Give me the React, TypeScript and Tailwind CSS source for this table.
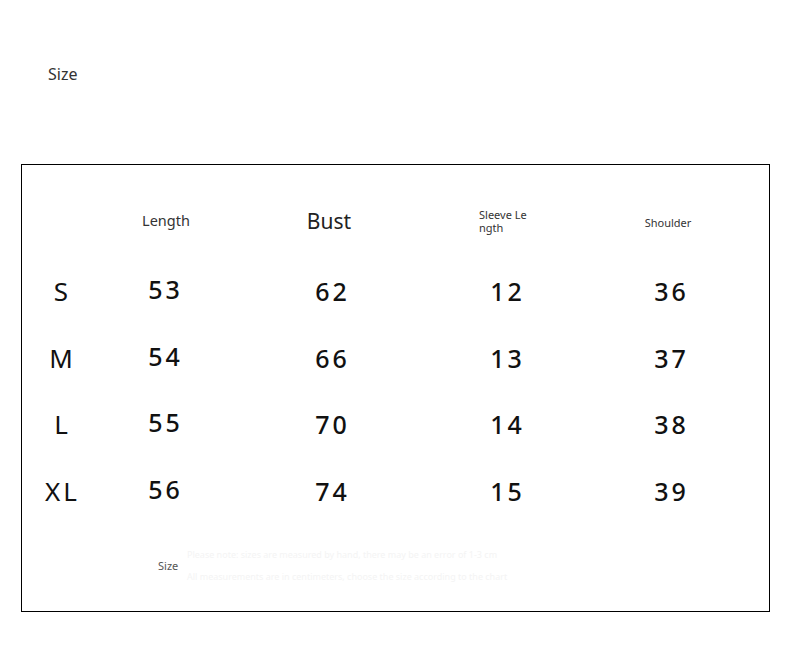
import React from "react";

const rows = [
  ["S", "53", "62", "12", "36"],
  ["M", "54", "66", "13", "37"],
  ["L", "55", "70", "14", "38"],
  ["XL", "56", "74", "15", "39"],
];

const font = { fontFamily: '"Noto Sans", "Open Sans", sans-serif' };

export default function App() {
  return (
    <div className="w-[790px] h-[663px] bg-white text-black" style={font}>
      <div className="pt-[63px] pl-[48px] h-[164px]">
        <div className="text-[16px] leading-[22px] text-[#333]">Size</div>
      </div>
      <div className="ml-[21px] w-[749px] h-[448px] border border-black">
        <div className="flex h-[76px] mt-[18px] items-center">
          <div className="w-[78px]" />
          <div className="w-[128px] flex justify-center text-[14.5px] leading-[20px] text-[#333] pl-[4px] -mt-[2px]">Length</div>
          <div className="w-[206px] flex justify-center text-[21px] leading-[28px] text-[#222] pr-[4px]">Bust</div>
          <div className="w-[144px] flex justify-center">
            <div className="w-[54px] text-[11px] leading-[13px] text-[#333] break-all">Sleeve Le ngth</div>
          </div>
          <div className="w-[184px] flex justify-center text-[11px] leading-[16px] text-[#333] pt-[3px] pr-[4px]">Shoulder</div>
        </div>
        {rows.map((r) => (
          <div key={r[0]} className="flex h-[66.5px] items-center text-[#111] font-medium">
            <div className="w-[78px] flex justify-center text-[26px] leading-[32px] tracking-[3px] pl-[3px] -mt-[2px] font-normal">{r[0]}</div>
            <div className="w-[128px] flex justify-center text-[25px] leading-[32px] tracking-[3px] pl-[3px] -mt-[6px]">{r[1]}</div>
            <div className="w-[206px] flex justify-center text-[25px] leading-[32px] tracking-[3px] pl-[3px] -mt-[2px]">{r[2]}</div>
            <div className="w-[144px] flex justify-center text-[25px] leading-[32px] tracking-[3px] pl-[3px] -mt-[2px]">{r[3]}</div>
            <div className="w-[184px] flex justify-center text-[25px] leading-[32px] tracking-[3px] pl-[3px] -mt-[2px]">{r[4]}</div>
          </div>
        ))}
        <div className="ml-[135px] w-[472px] mt-[25px] text-[9px] leading-[10px]">
          <div className="text-[#f4f4f4] whitespace-nowrap pl-[30px]">
            Please note: sizes are measured by hand, there may be an error of 1-3 cm
          </div>
          <div className="text-[#555] text-[11px] leading-[12px] pl-[1px]">Size</div>
          <div className="text-[#f4f4f4] whitespace-nowrap pl-[30px]">
            All measurements are in centimeters, choose the size according to the chart
          </div>
        </div>
      </div>
    </div>
  );
}
